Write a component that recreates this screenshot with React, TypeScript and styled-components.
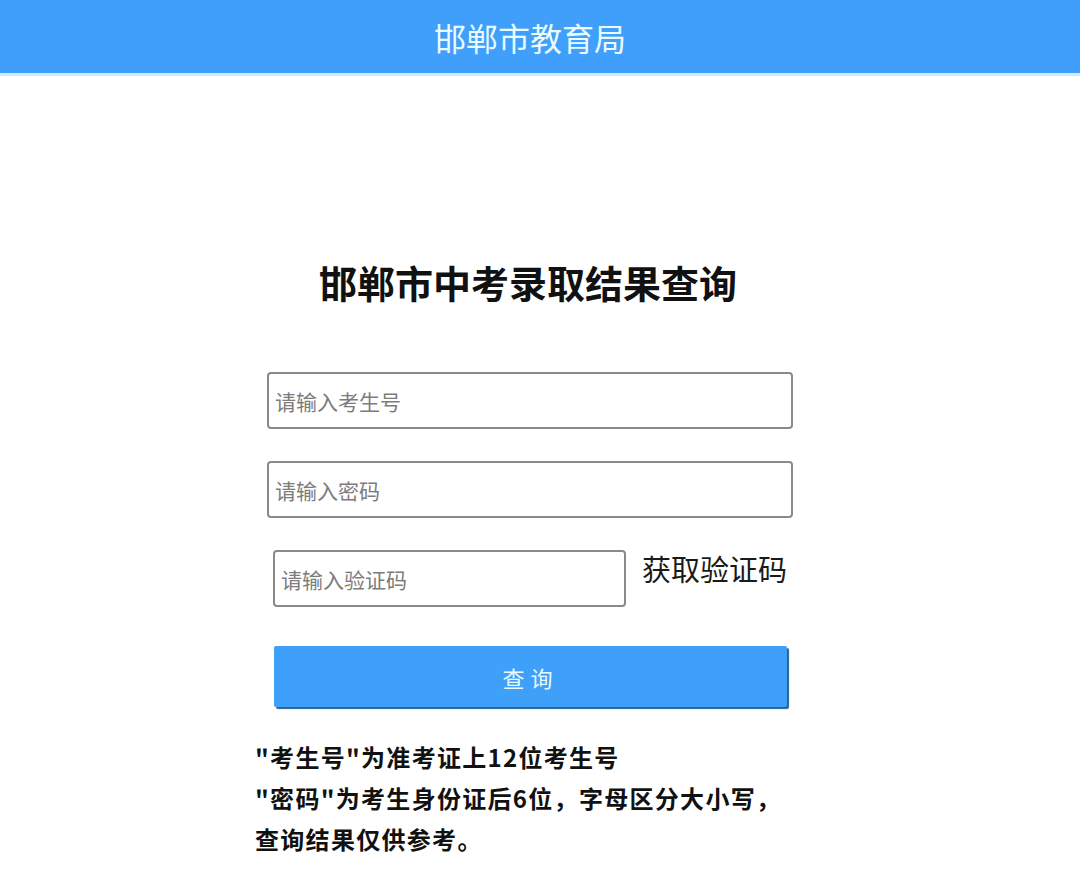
import React from 'react'
import styled, { createGlobalStyle } from 'styled-components'

const GlobalStyle = createGlobalStyle`
  html, body {
    margin: 0;
    padding: 0;
    background: #ffffff;
    font-family: "Noto Sans CJK SC", "Noto Sans", sans-serif;
  }
`

const Page = styled.div`
  width: 1080px;
  min-height: 886px;
  overflow: hidden;
`

const TopBar = styled.div`
  height: 73px;
  background: #3f9ffa;
  border-bottom: 3px solid #cfeaff;
  display: flex;
  align-items: center;
  justify-content: center;
  padding-right: 20px;
`

const TopTitle = styled.div`
  color: #e9fbff;
  font-size: 32px;
  font-weight: 400;
`

const Main = styled.div`
  display: flex;
  flex-direction: column;
  align-items: flex-start;
  padding: 176px 0 0 255px;
`

const Heading = styled.h1`
  margin: 0 0 60px 64px;
  font-size: 38px;
  font-weight: 700;
  color: #111;
  line-height: 60px;
`

const Field = styled.input<{ $narrow?: boolean }>`
  box-sizing: border-box;
  width: ${(p) => (p.$narrow ? '353px' : '526px')};
  height: 57px;
  margin-left: ${(p) => (p.$narrow ? '18px' : '12px')};
  border: 2px solid #8a8a8a;
  border-radius: 4px;
  padding: 0 6px;
  font-family: inherit;
  font-size: 21px;
  color: #333;
  outline: none;

  &::placeholder {
    color: #7c7c7c;
  }
`

const Group = styled.div`
  margin-bottom: 32px;
`

const CodeRow = styled.div`
  display: flex;
  align-items: flex-start;
  margin-bottom: 39px;
`

const CodeLink = styled.span`
  margin: -2px 0 0 16px;
  font-size: 29px;
  color: #1a1a1a;
  line-height: 40px;
`

const QueryButton = styled.button`
  width: 513px;
  height: 61px;
  margin-left: 19px;
  background: #3fa0fa;
  border: none;
  border-radius: 2px;
  box-shadow: 2px 2px 1px #2a5f8f;
  color: #e9fbff;
  font-family: inherit;
  font-size: 22px;
  letter-spacing: 6px;
  cursor: pointer;
`

const Notes = styled.div`
  margin-top: 29px;
  font-size: 24px;
  font-weight: 700;
  color: #111;
  line-height: 41px;
  letter-spacing: 1.3px;
`

export default function App() {
  return (
    <Page>
      <GlobalStyle />
      <TopBar>
        <TopTitle>邯郸市教育局</TopTitle>
      </TopBar>
      <Main>
        <Heading>邯郸市中考录取结果查询</Heading>
        <Group>
          <Field placeholder="请输入考生号" />
        </Group>
        <Group>
          <Field type="password" placeholder="请输入密码" />
        </Group>
        <CodeRow>
          <Field $narrow placeholder="请输入验证码" />
          <CodeLink>获取验证码</CodeLink>
        </CodeRow>
        <QueryButton>查询</QueryButton>
        <Notes>
          <div>"考生号"为准考证上12位考生号</div>
          <div>"密码"为考生身份证后6位，字母区分大小写，</div>
          <div>查询结果仅供参考。</div>
        </Notes>
      </Main>
    </Page>
  )
}
